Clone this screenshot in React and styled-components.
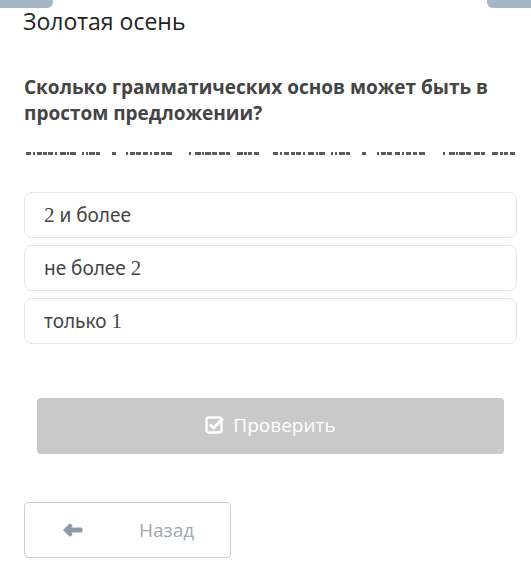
import React from "react";
import styled, { createGlobalStyle } from "styled-components";

const Global = createGlobalStyle`
  html, body { margin: 0; padding: 0; background: #fff; }
  body { font-family: "Open Sans", "Noto Sans", sans-serif; }
`;

const Page = styled.div`
  width: 531px;
  height: 587px;
  position: relative;
  overflow: hidden;
  background: #fff;
`;

const Tab = styled.div`
  position: absolute;
  top: 0;
  ${(p) => (p.$side === "left" ? "left: 0;" : "right: 0;")}
  width: ${(p) => p.$w}px;
  height: 8px;
  background: #a5b6c6;
  border-radius: ${(p) => (p.$side === "left" ? "0 0 6px 0" : "0 0 0 6px")};
`;

const Content = styled.div`
  padding: 6px 14px 0 24px;
  display: flex;
  flex-direction: column;
`;

const Title = styled.h1`
  margin: 0 0 0 -1px;
  font-family: "Open Sans", sans-serif;
  font-weight: 400;
  font-size: 23px;
  line-height: 30px;
  color: #222;
`;

const Question = styled.h2`
  margin: 38px 0 0 0;
  font-family: "Open Sans", sans-serif;
  font-weight: 700;
  font-size: 19px;
  line-height: 26px;
  color: #444;
`;

const CutLine = styled.svg`
  display: block;
  margin-top: 26px;
  width: 493px;
  height: 3px;
`;

const Options = styled.div`
  margin-top: 37px;
  display: flex;
  flex-direction: column;
  gap: 7px;
`;

const Option = styled.div`
  box-sizing: border-box;
  height: 46px;
  border: 1px solid #e6e6e6;
  border-radius: 8px;
  padding: 0 19px;
  display: flex;
  align-items: center;
  font-family: "Noto Sans", sans-serif;
  font-size: 19px;
  color: #444;
`;

const Digit = styled.span`
  font-family: "Liberation Serif", serif;
  font-size: 21px;
`;

const CheckButton = styled.button`
  margin: 54px 13px 0 13px;
  height: 56px;
  border: none;
  border-radius: 4px;
  background: #c9c9c9;
  color: #fff;
  font-family: "Open Sans", sans-serif;
  font-size: 19px;
  display: flex;
  align-items: center;
  justify-content: center;
  gap: 8px;
  padding: 0 0 2px 0;
`;

const BackButton = styled.button`
  margin-top: 48px;
  width: 207px;
  height: 56px;
  box-sizing: border-box;
  border: 1px solid #cfcfcf;
  border-radius: 4px;
  background: #fff;
  display: flex;
  align-items: center;
  padding: 0 0 0 37px;
  font-family: "Open Sans", sans-serif;
  font-size: 19px;
  color: #a0a8b0;
`;

const BackLabel = styled.span`
  margin-left: 56px;
`;

const segs = [
  [26, 31], [33, 35], [37, 42], [43, 47], [48, 53], [55, 57], [60, 66],
  [67, 69], [70, 76], [82, 84], [86, 88], [89, 95], [96, 100], [112, 116],
  [126, 128], [130, 135], [136, 141], [143, 148], [150, 152], [154, 159],
  [161, 165], [166, 172], [189, 191], [195, 201], [202, 204], [205, 211],
  [212, 217], [219, 225], [226, 230], [237, 243], [244, 247], [248, 252],
  [254, 259],
];

function CutText() {
  const rects = [];
  [0, 247].forEach((off, i) =>
    segs.forEach(([a, b], j) => {
      const k = i === 0 ? 1 : 1.04;
      const x = Math.round(2 + (a - 26) * k + off);
      const w = Math.max(1, Math.round((b - a) * k));
      rects.push(
        <rect key={`${i}-${j}`} x={x} y={0} width={w} height={3} fill="#5a5a5a" />
      );
    })
  );
  return (
    <CutLine viewBox="0 0 493 3" shapeRendering="crispEdges">
      {rects}
    </CutLine>
  );
}

export default function App() {
  return (
    <Page>
      <Global />
      <Tab $side="left" $w={53} />
      <Tab $side="right" $w={44} />
      <Content>
        <Title>Золотая осень</Title>
        <Question>
          Сколько грамматических основ может быть в простом предложении?
        </Question>
        <CutText />
        <Options>
          <Option><Digit>2</Digit>&nbsp;и более</Option>
          <Option>не более&nbsp;<Digit>2</Digit></Option>
          <Option>только&nbsp;<Digit>1</Digit></Option>
        </Options>
        <CheckButton>
          <svg width="20" height="18" viewBox="0 0 20 18">
            <rect x="1.5" y="1.5" width="15" height="15" rx="2" fill="none" stroke="#fff" strokeWidth="2.4" />
            <path d="M5 8.5 L8.5 12 L18 2.5" fill="none" stroke="#fff" strokeWidth="3" />
          </svg>
          Проверить
        </CheckButton>
        <BackButton>
          <svg width="21" height="14" viewBox="0 0 21 14">
            <path
              d="M1 7 L7 1 Q8 0 9 1 L10 2 Q11 3 10 4 L9 4.5 H19 Q20.5 4.5 20.5 6 V8 Q20.5 9.5 19 9.5 H9 L10 10 Q11 11 10 12 L9 13 Q8 14 7 13 Z"
              fill="#8c9aa8"
            />
          </svg>
          <BackLabel>Назад</BackLabel>
        </BackButton>
      </Content>
    </Page>
  );
}
